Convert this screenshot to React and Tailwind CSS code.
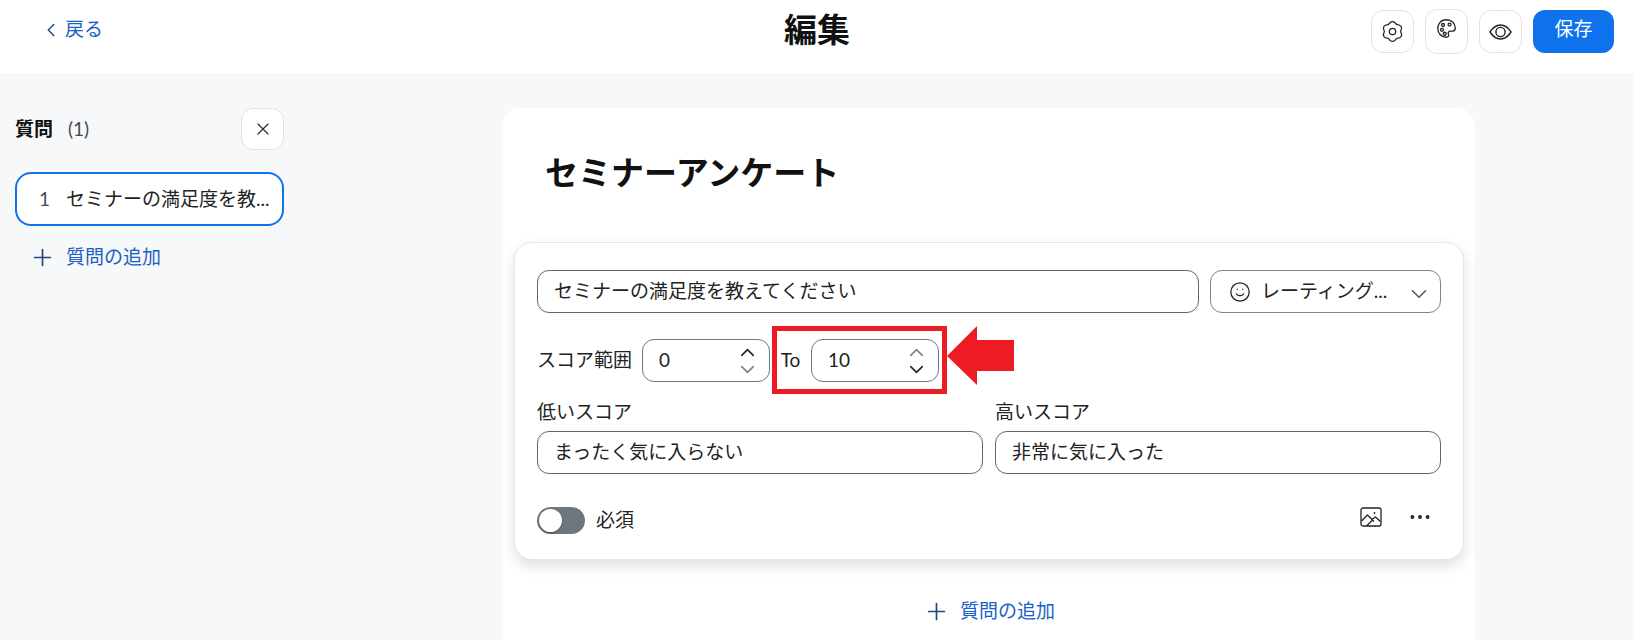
import React from 'react';
import { ChevronLeft, ChevronUp, ChevronDown, X, Plus, Smile, Ellipsis } from 'lucide-react';

const font = "font-['Lato','Noto_Sans_CJK_JP',sans-serif]";

// six rounded lobes around a circle, one lobe pointing up
const gearPath = (() => {
  const at = (deg) => {
    const a = (deg * Math.PI) / 180;
    return `${(12 + 9.8 * Math.cos(a)).toFixed(2)} ${(12 + 9.8 * Math.sin(a)).toFixed(2)}`;
  };
  let d = `M${at(-90 - 21)}`;
  for (let i = 0; i < 6; i++) {
    const c = -90 + i * 60;
    d += ` A4 4 0 0 1 ${at(c + 21)} A3 3 0 0 0 ${at(c + 60 - 21)}`;
  }
  return d + 'Z';
})();

function IconButton({ children, className = 'h-[43px]' }) {
  return (
    <button className={`w-[43px] flex items-center justify-center bg-white rounded-[12px] border border-[#e0e2e8] text-[#222] ${className}`}>
      {children}
    </button>
  );
}

function NumberBox({ value, upDark }) {
  return (
    <div className="w-[128px] h-[43px] shrink-0 flex items-center justify-between pl-[16px] pr-[10px] rounded-[12px] border border-[#6e7680] text-[19px] text-[#222]">
      <span>{value}</span>
      <div className="flex flex-col">
        <ChevronUp size={23} strokeWidth={1.6} className={upDark ? 'text-[#222]' : 'text-[#777f8a]'} />
        <ChevronDown size={23} strokeWidth={1.6} className={`-mt-[6px] ${upDark ? 'text-[#777f8a]' : 'text-[#222]'}`} />
      </div>
    </div>
  );
}

function TextBox({ value, className = '' }) {
  return (
    <div className={`h-[43px] flex items-center px-[16px] pb-[1px] rounded-[12px] border border-[#5f6670] text-[19px] text-[#222] ${className}`}>
      {value}
    </div>
  );
}

function Field({ label, value }) {
  return (
    <div className="flex-1">
      <div className="text-[19px] leading-[26px] text-[#222] mb-[6px]">{label}</div>
      <TextBox value={value} />
    </div>
  );
}

function AddQuestion({ className = '' }) {
  return (
    <div className={`flex items-center gap-[10px] h-[27px] text-[#1a62c4] text-[19px] ${className}`}>
      <Plus size={27} strokeWidth={1.5} className="text-[#23477d]" />
      <span>質問の追加</span>
    </div>
  );
}

export default function App() {
  return (
    <div className={`${font} h-[640px] overflow-hidden bg-[#f7f8fa]`}>
      {/* top bar */}
      <div className="h-[75px] bg-white border-b border-[#eeeff2] grid grid-cols-[744px_auto_1fr] pl-[40px] pr-[19px]">
        <div className="flex items-start pt-[16px] gap-[3px] text-[#1a62c4] text-[19px] leading-[26px]">
          <ChevronLeft size={22} strokeWidth={1.6} className="mt-[3px] text-[#23477d]" />
          <span>戻る</span>
        </div>
        <div className="pt-[6px] text-[33px] leading-[46px] font-bold text-[#111]">編集</div>
        <div className="flex justify-end items-start pt-[10px] gap-[11px]">
          <IconButton>
            <svg width="23" height="23" viewBox="-1 -1 26 26" fill="none" stroke="currentColor" strokeWidth="1.4">
              <path d={gearPath} />
              <circle cx="12" cy="12" r="3.6" />
            </svg>
          </IconButton>
          <IconButton className="h-[45px] -mt-[1px]">
            <svg width="21" height="21" viewBox="0 0 24 24" fill="none" stroke="currentColor" strokeWidth="1.5" className="-mt-[7px]">
              <path d="M12 2 C5.5 2 2 6.8 2 12 C2 17.5 6.5 22 11.5 22 C14.5 22 15 20 14.2 18.5 C13.4 16.8 14.4 15 16.5 15 L19 15 C21 15 22 13.5 22 11.5 C22 6 17.5 2 12 2Z" />
              <circle cx="8" cy="8" r="1.7" />
              <circle cx="15.5" cy="7.5" r="1.7" />
              <circle cx="6.8" cy="13.5" r="1.7" />
              <circle cx="10" cy="18" r="1.7" />
            </svg>
          </IconButton>
          <IconButton>
            <svg width="23" height="16" viewBox="0 0 23 16" fill="none" stroke="currentColor" strokeWidth="1.4">
              <path d="M1 8 C4.5 2.5 8 1 11.5 1 C15 1 18.5 2.5 22 8 C18.5 13.5 15 15 11.5 15 C8 15 4.5 13.5 1 8Z" />
              <circle cx="11.5" cy="8" r="4.6" />
            </svg>
          </IconButton>
          <button className="w-[81px] h-[43px] rounded-[12px] bg-[#0e72ed] text-white text-[19px] pb-[5px]">保存</button>
        </div>
      </div>

      <div className="flex">
        {/* question list */}
        <div className="w-[269px] ml-[15px] pt-[33px] shrink-0">
          <div className="flex items-center justify-between h-[42px]">
            <div className="flex items-center gap-[15px]">
              <span className="font-bold text-[19px] text-[#111]">質問</span>
              <span className="text-[#444b55] text-[19px]">(1)</span>
            </div>
            <button className="w-[43px] h-[42px] flex items-center justify-center bg-white rounded-[12px] border border-[#e0e2e8] text-[#333]">
              <X size={20} strokeWidth={1.5} />
            </button>
          </div>
          <div className="mt-[22px] h-[54px] flex items-center pl-[22px] bg-white rounded-[16px] border-2 border-[#0e72ed] text-[19px] text-[#222]">
            <span className="w-[27px] shrink-0 text-[#444b55]">1</span>
            <span className="whitespace-nowrap">セミナーの満足度を教...</span>
          </div>
          <AddQuestion className="mt-[18px] ml-[14px]" />
        </div>

        {/* survey */}
        <div className="w-[972px] ml-[219px] mt-[33px] h-[600px] bg-white rounded-t-[18px] px-[11px]">
          <h1 className="pl-[31px] pt-[41px] text-[33px] leading-[46px] font-bold text-[#111]">セミナーアンケート</h1>

          <div className="mt-[47px] h-[318px] rounded-[18px] border border-[#e4e6ea] bg-white shadow-[0_6px_14px_rgba(0,0,0,0.13)] px-[22px] pt-[27px]">
            <div className="flex gap-[11px]">
              <TextBox value="セミナーの満足度を教えてください" className="flex-1" />
              <div className="w-[231px] h-[43px] flex items-center pl-[18px] pr-[8px] rounded-[12px] border border-[#7c838d] text-[19px] text-[#222]">
                <Smile size={22} strokeWidth={1.4} />
                <span className="ml-[10px] flex-1 whitespace-nowrap">レーティング...</span>
                <ChevronDown size={26} strokeWidth={1.5} className="mt-[4px] text-[#555c66]" />
              </div>
            </div>

            <div className="relative flex items-center mt-[26px]">
              <span className="w-[105px] shrink-0 text-[19px] text-[#222] whitespace-nowrap">スコア範囲</span>
              <NumberBox value="0" upDark />
              <span className="w-[41px] text-center text-[19px] text-[#222]">To</span>
              <NumberBox value="10" />
              {/* red marker added over the screenshot */}
              <div className="absolute left-[235px] top-[-13px] w-[175px] h-[68px] border-[5px] border-[#ed1c24]" />
              <svg className="absolute left-[410px] top-[-13px]" width="67" height="59" viewBox="0 0 67 59">
                <polygon points="0,30 30,0 30,14 67,14 67,45 30,45 30,59" fill="#ed1c24" />
              </svg>
            </div>

            <div className="flex gap-[12px] mt-[17px]">
              <Field label="低いスコア" value="まったく気に入らない" />
              <Field label="高いスコア" value="非常に気に入った" />
            </div>

            <div className="flex items-center justify-between mt-[32px] pr-[8px]">
              <div className="flex items-center gap-[11px] text-[19px] text-[#222]">
                <div className="w-[48px] h-[27px] rounded-full bg-[#6e7680] p-[2px]">
                  <div className="w-[23px] h-[23px] rounded-full bg-white shadow-[0_1px_2px_rgba(0,0,0,0.4)]" />
                </div>
                <span>必須</span>
              </div>
              <div className="flex items-center gap-[25px] text-[#222] -mt-[6px]">
                <svg width="22" height="20" viewBox="0 0 22 20" fill="none" stroke="currentColor" strokeWidth="1.3" strokeLinejoin="round">
                  <rect x="1" y="1" width="20" height="18" rx="2" />
                  <path d="M1.5 14 L7.5 8 L14 14.5 M12 12.5 L15.5 10 L20.5 14.5 M7 18.5 L12 13.5" />
                  <circle cx="14.5" cy="6" r="0.9" fill="currentColor" stroke="none" />
                </svg>
                <Ellipsis size={26} strokeWidth={1.6} />
              </div>
            </div>
          </div>

          <AddQuestion className="mt-[38px] justify-center" />
        </div>
      </div>
    </div>
  );
}
